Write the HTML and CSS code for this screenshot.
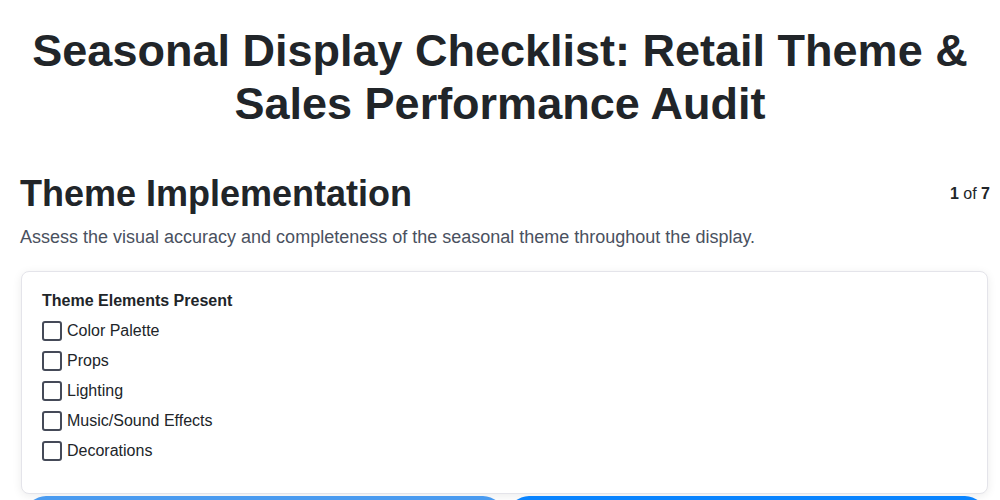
FILE: index.html
```
<!DOCTYPE html>
<html lang="en">
<head>
<meta charset="utf-8">
<title>Seasonal Display Checklist</title>
<link rel="stylesheet" href="styles.css">
</head>
<body>
<div class="page">
  <h1 class="title">Seasonal Display Checklist: Retail Theme &amp; Sales Performance Audit</h1>
  <div class="step-head">
    <h2 class="step-title">Theme Implementation</h2>
    <div class="step-count"><b>1</b> of <b>7</b></div>
  </div>
  <p class="step-desc">Assess the visual accuracy and completeness of the seasonal theme throughout the display.</p>
  <div class="card">
    <div class="field-label">Theme Elements Present</div>
    <label class="check"><span class="box"></span><span>Color Palette</span></label>
    <label class="check"><span class="box"></span><span>Props</span></label>
    <label class="check"><span class="box"></span><span>Lighting</span></label>
    <label class="check"><span class="box"></span><span>Music/Sound Effects</span></label>
    <label class="check"><span class="box"></span><span>Decorations</span></label>
  </div>
  <div class="nav">
    <button class="btn btn-prev">Previous</button>
    <button class="btn btn-next">Next</button>
  </div>
</div>
</body>
</html>
```
FILE: styles.css
```
* { box-sizing: border-box; }
html, body { margin: 0; padding: 0; background: #ffffff; }
body {
  font-family: "Liberation Sans", Arial, sans-serif;
  color: #212529;
}
.page {
  padding: 24px 10px 0 20px;
}
.title {
  margin: 0 0 42px -10px;
  font-size: 45px;
  line-height: 53px;
  font-weight: 700;
  text-align: center;
  color: #212529;
}
.step-head {
  display: flex;
  justify-content: space-between;
  align-items: center;
}
.step-title {
  margin: 0;
  font-size: 36px;
  line-height: 43px;
  font-weight: 700;
  color: #212529;
}
.step-count {
  font-size: 16px;
  color: #212529;
}
.step-desc {
  margin: 10px 0 0 0;
  font-size: 18px;
  line-height: 25px;
  color: #4a5160;
}
.card {
  margin: 21px 2px 0 1px;
  padding: 19px 20px 32px 20px;
  background: #ffffff;
  border: 1px solid #e4e4ea;
  border-radius: 8px;
  box-shadow: 0 2px 10px rgba(0, 0, 0, 0.08);
  display: flex;
  flex-direction: column;
  gap: 10px;
}
.field-label {
  font-size: 16px;
  font-weight: 700;
  line-height: 20px;
}
.check {
  display: flex;
  align-items: center;
  gap: 5px;
  font-size: 16px;
  line-height: 20px;
}
.box {
  width: 20px;
  height: 20px;
  border: 2px solid #454a58;
  border-radius: 3px;
  background: #fff;
  flex: none;
}
.nav {
  display: flex;
  gap: 6px;
  margin: 2px 5px 0 6px;
}
.btn {
  flex: 1;
  height: 60px;
  border: none;
  border-radius: 20px;
  color: #fff;
  font-family: "Liberation Sans", Arial, sans-serif;
  font-size: 16px;
}
.btn-prev { background: #4a9bf0; }
.btn-next { background: #0a84ff; }
```
